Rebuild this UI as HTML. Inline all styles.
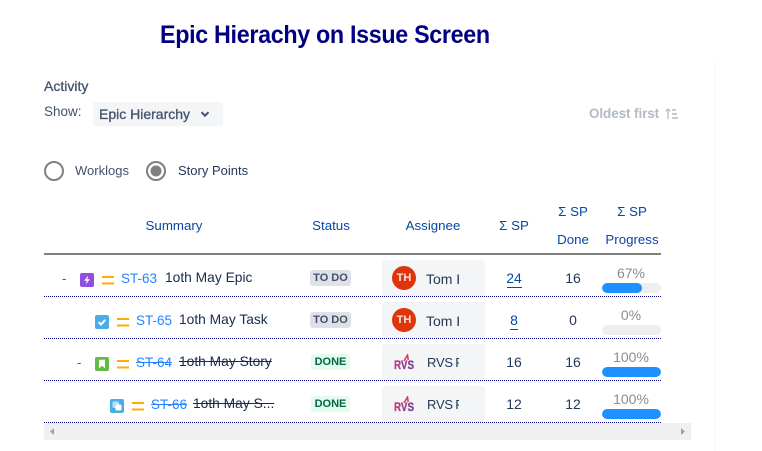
<!DOCTYPE html>
<html><head><meta charset="utf-8"><style>
html,body{margin:0;padding:0;background:#fff}
body{width:762px;height:451px;position:relative;overflow:hidden;font-family:"Liberation Sans",sans-serif}
.a{position:absolute;white-space:nowrap;line-height:16px}
.b{position:absolute}
.h{color:#0747a6;font-size:13.3px;transform:translateX(-50%)}
.k{color:#2684ff;font-size:13.5px}
.t{color:#172b4d;font-size:13.8px}
.s{text-decoration:line-through}
.c{color:#253858;font-size:14px;transform:translateX(-50%)}
.p{color:#8c8c8c;font-size:14px;transform:translateX(-50%)}
.d{position:absolute;left:44px;width:617px;border-top:1px dotted #00008b;height:0}
.bar{position:absolute;left:602px;width:59px;height:10px;border-radius:5px;background:#eee;overflow:hidden}
.bar i{display:block;height:10px;background:#1e90ff;border-radius:5px}
.pr{position:absolute;width:12px;height:2.4px;background:#ffab00;box-shadow:0 6.5px 0 #ffab00}
.bg{position:absolute;left:382px;width:103px;height:36px;background:#f4f5f7;border-radius:3px}
.lz{position:absolute;font-size:11px;font-weight:bold;border-radius:3px;text-align:center;height:16px;line-height:16px}
.todo{background:#dfe1e6;color:#42526e;left:310px;width:41px}
.done{background:#e3fcef;color:#006644;left:311px;width:39px}
.av{position:absolute;left:392px;width:24px;height:24px;border-radius:50%;background:#de350b;color:#fbe3dc;font-size:11px;font-weight:bold;line-height:24px;text-align:center}
.nm{position:absolute;left:426px;width:33px;overflow:hidden;white-space:nowrap;font-size:14px;color:#253858;line-height:16px}
.rv{font-size:13px;left:427px;width:32px;word-spacing:-1px;letter-spacing:-.2px}
</style></head><body>

<div class="a" style="left:160px;top:20px;font-size:25px;line-height:30px;font-weight:bold;color:#000080;letter-spacing:-.35px;transform:scaleX(.932);transform-origin:left center">Epic Hierachy on Issue Screen</div>

<div class="b" style="left:715px;top:62px;width:1px;height:389px;background:#f4f5f7"></div>

<div class="a" style="left:44px;top:78px;font-size:14px;color:#42526e;-webkit-text-stroke:.3px #42526e">Activity</div>
<div class="a" style="left:44px;top:104px;font-size:13.5px;color:#42526e">Show:</div>
<div class="b" style="left:93px;top:102px;width:130px;height:24px;background:#f4f5f7;border-radius:3px"></div>
<div class="a" style="left:99px;top:106px;font-size:14px;color:#42526e;-webkit-text-stroke:.3px #42526e">Epic Hierarchy</div>
<svg class="b" style="left:200px;top:109px" width="10" height="10" viewBox="0 0 10 10"><path d="M1.500 3.200L5 6.700 8.500 3.200" fill="none" stroke="#42526e" stroke-width="2"/></svg>

<div class="a" style="left:589px;top:106px;font-size:13.5px;font-weight:bold;color:#b3bac5;letter-spacing:-.1px">Oldest first</div>
<svg class="b" style="left:664px;top:107px" width="15" height="14" viewBox="0 0 15 14"><path d="M4 12V2M1.700 4.300L4 2l2.300 2.300" fill="none" stroke="#b3bac5" stroke-width="1.200"/><path d="M8 3h4M8 7h5M8 11h6" stroke="#b3bac5" stroke-width="1.400"/></svg>

<svg class="b" style="left:44px;top:161px" width="125" height="20" viewBox="0 0 125 20">
<circle cx="10" cy="10" r="9" fill="#fff" stroke="#808080" stroke-width="2"/>
<circle cx="112" cy="10" r="9" fill="#fff" stroke="#808080" stroke-width="2"/>
<circle cx="112" cy="10" r="5.500" fill="#808080"/></svg>
<div class="a" style="left:75px;top:163px;font-size:13px;color:#42526e">Worklogs</div>
<div class="a" style="left:178px;top:163px;font-size:13px;color:#253858">Story Points</div>

<div class="a h" style="left:174px;top:218px">Summary</div>
<div class="a h" style="left:331px;top:218px">Status</div>
<div class="a h" style="left:433px;top:218px">Assignee</div>
<div class="a h" style="left:514px;top:218px">Σ SP</div>
<div class="a h" style="left:573px;top:204px">Σ SP</div>
<div class="a h" style="left:573px;top:232px">Done</div>
<div class="a h" style="left:632px;top:204px">Σ SP</div>
<div class="a h" style="left:632px;top:232px">Progress</div>
<div class="b" style="left:44px;top:253px;width:617px;height:2px;background:#808080"></div>

<div class="bg" style="top:260px"></div>
<div class="bg" style="top:302px"></div>
<div class="bg" style="top:344px"></div>
<div class="bg" style="top:386px"></div>

<svg class="b" style="left:0;top:0" width="0" height="0"><defs><linearGradient id="g" x1="0" x2="1" y1="0" y2="0"><stop offset="0" stop-color="#c63a7c"/><stop offset="1" stop-color="#6a3f9c"/></linearGradient></defs></svg>

<!-- row 1 -->
<div class="a" style="left:62px;top:271px;font-size:13px;color:#42526e">-</div>
<svg class="b" style="left:80px;top:273px" width="14" height="14" viewBox="0 0 14 14"><rect width="14" height="14" rx="2" fill="#904ee2"/><path d="M8.200 2.500L4.200 7.800H6.800L5.800 11.500 9.800 6.200H7.300Z" fill="#fff"/></svg>
<div class="pr" style="left:102px;top:276px"></div>
<div class="a k" style="left:121px;top:271px">ST-63</div>
<div class="a t" style="left:165px;top:270px">1oth May Epic</div>
<div class="lz todo" style="top:270px">TO DO</div>
<div class="av" style="top:266px">TH</div>
<div class="nm" style="top:271px">Tom Hanks</div>
<div class="a c" style="left:514px;top:270px;color:#0747a6">24</div>
<div class="b" style="left:507px;top:287px;width:15px;height:1px;background:#0747a6"></div>
<div class="a c" style="left:573px;top:270px">16</div>
<div class="a p" style="left:631px;top:265px">67%</div>
<div class="bar" style="top:283px"><i style="width:40px"></i></div>
<div class="d" style="top:296px"></div>

<!-- row 2 -->
<svg class="b" style="left:95px;top:315px" width="14" height="14" viewBox="0 0 14 14"><rect width="14" height="14" rx="2" fill="#4bade8"/><path d="M3.700 7.200L6 9.500 10.300 4.800" fill="none" stroke="#fff" stroke-width="2"/></svg>
<div class="pr" style="left:117px;top:318px"></div>
<div class="a k" style="left:136px;top:313px">ST-65</div>
<div class="a t" style="left:179px;top:312px">1oth May Task</div>
<div class="lz todo" style="top:312px">TO DO</div>
<div class="av" style="top:308px">TH</div>
<div class="nm" style="top:313px">Tom Hanks</div>
<div class="a c" style="left:514px;top:312px;color:#0747a6">8</div>
<div class="b" style="left:510px;top:329px;width:8px;height:1px;background:#0747a6"></div>
<div class="a c" style="left:573px;top:312px">0</div>
<div class="a p" style="left:631px;top:307px">0%</div>
<div class="bar" style="top:325px"></div>
<div class="d" style="top:338px"></div>

<!-- row 3 -->
<div class="a" style="left:77px;top:355px;font-size:13px;color:#42526e">-</div>
<svg class="b" style="left:95px;top:357px" width="14" height="14" viewBox="0 0 14 14"><rect width="14" height="14" rx="2" fill="#65ba43"/><path d="M4 2.800h6v8.400L7 8.800 4 11.200Z" fill="#fff"/></svg>
<div class="pr" style="left:117px;top:360px"></div>
<div class="a k s" style="left:136px;top:355px">ST-64</div>
<div class="a t s" style="left:179px;top:354px">1oth May Story</div>
<div class="lz done" style="top:354px">DONE</div>
<svg class="b" style="left:394px;top:354px" width="20" height="17" viewBox="0 0 20 17"><text x="0" y="15" font-family="Liberation Sans,sans-serif" font-size="12" font-weight="bold" fill="url(#g)" stroke="url(#g)" stroke-width=".3" textLength="20" lengthAdjust="spacingAndGlyphs">RVS</text><path d="M10 7L13.500 1l.7 5" fill="none" stroke="#e0335f" stroke-width="1.500"/></svg>
<div class="nm rv" style="top:355px">RVS Pvt</div>
<div class="a c" style="left:514px;top:354px">16</div>
<div class="a c" style="left:573px;top:354px">16</div>
<div class="a p" style="left:631px;top:349px">100%</div>
<div class="bar" style="top:367px"><i style="width:59px"></i></div>
<div class="d" style="top:380px"></div>

<!-- row 4 -->
<svg class="b" style="left:110px;top:399px" width="14" height="14" viewBox="0 0 14 14"><rect width="14" height="14" rx="2" fill="#4bade8"/><rect x="2.500" y="2.500" width="6.500" height="6.500" rx="1.500" fill="#b9def5"/><rect x="5.500" y="5.500" width="6" height="6" rx="1.500" fill="#fff"/></svg>
<div class="pr" style="left:132px;top:402px"></div>
<div class="a k s" style="left:151px;top:397px">ST-66</div>
<div class="a t s" style="left:193px;top:396px">1oth May S...</div>
<div class="lz done" style="top:396px">DONE</div>
<svg class="b" style="left:394px;top:396px" width="20" height="17" viewBox="0 0 20 17"><text x="0" y="15" font-family="Liberation Sans,sans-serif" font-size="12" font-weight="bold" fill="url(#g)" stroke="url(#g)" stroke-width=".3" textLength="20" lengthAdjust="spacingAndGlyphs">RVS</text><path d="M10 7L13.500 1l.7 5" fill="none" stroke="#e0335f" stroke-width="1.500"/></svg>
<div class="nm rv" style="top:397px">RVS Pvt</div>
<div class="a c" style="left:514px;top:396px">12</div>
<div class="a c" style="left:573px;top:396px">12</div>
<div class="a p" style="left:631px;top:391px">100%</div>
<div class="bar" style="top:409px"><i style="width:59px"></i></div>
<div class="d" style="top:422px"></div>

<!-- scrollbar -->
<div class="b" style="left:44px;top:423px;width:647px;height:17px;background:#f0f0f0"></div>
<svg class="b" style="left:44px;top:423px" width="647" height="17" viewBox="0 0 647 17"><path d="M10 5v7L6 8.500Z" fill="#a3a3a3"/><path d="M637 5v7l4-3.500Z" fill="#a3a3a3"/></svg>

</body></html>
